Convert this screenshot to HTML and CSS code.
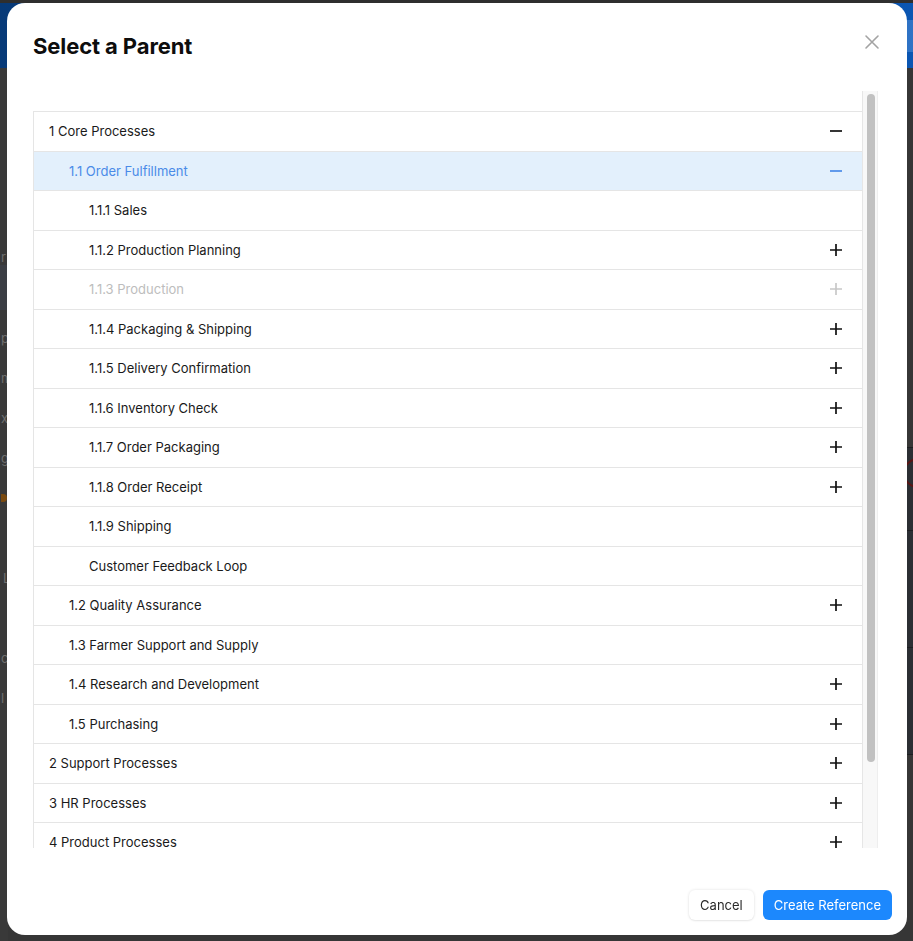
FILE: index.html
```html
<!DOCTYPE html>
<html lang="en">
<head>
<meta charset="utf-8">
<title>Select a Parent</title>
<link rel="stylesheet" href="styles.css">
</head>
<body>
<div class="app">
  <header class="app-bar">
    <div class="app-bar-top"></div>
    <div class="app-bar-band"></div>
    <div class="app-bar-bottom"></div>
  </header>
  <div class="app-main">
    <nav class="side">
      <div class="side-item side-first"><span>r</span></div>
      <div class="side-item side-band"></div>
      <div class="side-item"><span>p</span></div>
      <div class="side-item"><span>m</span></div>
      <div class="side-item"><span>x</span></div>
      <div class="side-item"><span>g</span></div>
      <div class="side-item"><span class="dot"></span></div>
      <div class="side-item side-gap"><span class="ind">L</span></div>
      <div class="side-item side-gap"><span>c</span></div>
      <div class="side-item"><span>l</span></div>
    </nav>
    <div class="canvas">
      <div class="canvas-spacer"></div>
      <div class="canvas-panel">
        <div class="panel-row panel-row-a"><span class="ring"></span></div>
        <div class="panel-row panel-row-b"></div>
        <div class="panel-row panel-row-c"></div>
      </div>
    </div>
  </div>
</div>

<div class="overlay">
  <div class="modal" role="dialog" aria-labelledby="modal-title">
    <div class="modal-header">
      <h2 class="modal-title" id="modal-title">Select a Parent</h2>
    </div>
    <button class="modal-close" aria-label="Close">
      <svg viewBox="0 0 16 16" width="16" height="16"><path d="M2 2L14 14M14 2L2 14" stroke="#a3a3a3" stroke-width="1.6" fill="none" stroke-linecap="round"/></svg>
    </button>
    <div class="modal-body">
      <div class="tree-scroll">
        <ul class="tree">
          <li class="row l0"><span class="label">1 Core Processes</span><svg class="ico" viewBox="0 0 12 12"><path d="M0 6H12" /></svg></li>
          <li class="row l1 selected"><span class="label">1.1 Order Fulfillment</span><svg class="ico" viewBox="0 0 12 12"><path d="M0 6H12" /></svg></li>
          <li class="row l2"><span class="label">1.1.1 Sales</span></li>
          <li class="row l2"><span class="label">1.1.2 Production Planning</span><svg class="ico" viewBox="0 0 12 12"><path d="M0 6H12M6 0V12" /></svg></li>
          <li class="row l2 disabled"><span class="label">1.1.3 Production</span><svg class="ico" viewBox="0 0 12 12"><path d="M0 6H12M6 0V12" /></svg></li>
          <li class="row l2"><span class="label">1.1.4 Packaging &amp; Shipping</span><svg class="ico" viewBox="0 0 12 12"><path d="M0 6H12M6 0V12" /></svg></li>
          <li class="row l2"><span class="label">1.1.5 Delivery Confirmation</span><svg class="ico" viewBox="0 0 12 12"><path d="M0 6H12M6 0V12" /></svg></li>
          <li class="row l2"><span class="label">1.1.6 Inventory Check</span><svg class="ico" viewBox="0 0 12 12"><path d="M0 6H12M6 0V12" /></svg></li>
          <li class="row l2"><span class="label">1.1.7 Order Packaging</span><svg class="ico" viewBox="0 0 12 12"><path d="M0 6H12M6 0V12" /></svg></li>
          <li class="row l2"><span class="label">1.1.8 Order Receipt</span><svg class="ico" viewBox="0 0 12 12"><path d="M0 6H12M6 0V12" /></svg></li>
          <li class="row l2"><span class="label">1.1.9 Shipping</span></li>
          <li class="row l2"><span class="label">Customer Feedback Loop</span></li>
          <li class="row l1"><span class="label">1.2 Quality Assurance</span><svg class="ico" viewBox="0 0 12 12"><path d="M0 6H12M6 0V12" /></svg></li>
          <li class="row l1"><span class="label">1.3 Farmer Support and Supply</span></li>
          <li class="row l1"><span class="label">1.4 Research and Development</span><svg class="ico" viewBox="0 0 12 12"><path d="M0 6H12M6 0V12" /></svg></li>
          <li class="row l1"><span class="label">1.5 Purchasing</span><svg class="ico" viewBox="0 0 12 12"><path d="M0 6H12M6 0V12" /></svg></li>
          <li class="row l0"><span class="label">2 Support Processes</span><svg class="ico" viewBox="0 0 12 12"><path d="M0 6H12M6 0V12" /></svg></li>
          <li class="row l0"><span class="label">3 HR Processes</span><svg class="ico" viewBox="0 0 12 12"><path d="M0 6H12M6 0V12" /></svg></li>
          <li class="row l0"><span class="label">4 Product Processes</span><svg class="ico" viewBox="0 0 12 12"><path d="M0 6H12M6 0V12" /></svg></li>
        </ul>
      </div>
      <div class="scrollbar" aria-hidden="true"><div class="scrollbar-thumb"></div></div>
    </div>
    <div class="modal-footer">
      <button class="btn btn-default">Cancel</button>
      <button class="btn btn-primary">Create Reference</button>
    </div>
  </div>
</div>
</body>
</html>
```

FILE: styles.css
```css
* { box-sizing: border-box; }

html, body {
  margin: 0;
  padding: 0;
  height: 100%;
}

body {
  background: #363636;
  font-family: Inter, "Noto Sans", "Liberation Sans", sans-serif;
  overflow: hidden;
}

/* ---------- background application (dimmed) ---------- */
.app {
  display: flex;
  flex-direction: column;
  height: 100%;
}

.app-bar {
  display: flex;
  flex-direction: column;
  height: 68px;
  border-top: 3px solid #2f2f2f;
  background: linear-gradient(90deg, #073a78 0%, #0a4c9e 60%, #0b56b2 100%);
}

.app-bar-top { height: 17px; }
.app-bar-band {
  height: 32px;
  background: linear-gradient(90deg, rgba(255,255,255,0) 0%, rgba(255,255,255,0) 70%, rgba(90,150,220,0.45) 100%);
}
.app-bar-bottom { flex: 1; }

.app-main {
  display: flex;
  flex: 1;
  min-height: 0;
}

.side {
  width: 8px;
  overflow: hidden;
  display: flex;
  flex-direction: column;
  background: #393939;
  color: #6f6f6f;
  font-size: 13px;
  padding-top: 180px;
}

.side-item {
  display: flex;
  justify-content: flex-start;
  align-items: center;
  height: 40px;
  white-space: nowrap;
  padding-left: 1px;
}

.side-first { height: 17px; }
.side-band {
  height: 45px;
  background: #3b3e44;
  margin-bottom: 8px;
}
.side-gap { margin-top: 40px; }

.ind { padding-left: 2px; }

.dot {
  display: inline-block;
  width: 6px;
  height: 8px;
  border-radius: 0 4px 4px 0;
  background: #7a4a10;
}

.canvas {
  flex: 1;
  display: flex;
  flex-direction: column;
  background: #363636;
}

.canvas-spacer { height: 379px; }

.canvas-panel {
  display: flex;
  flex-direction: column;
  background: #2b2e33;
  border-top: 1px solid #1c1e21;
}

.panel-row {
  border-bottom: 1px solid #1c1e21;
  display: flex;
  justify-content: flex-end;
}
.panel-row-a { height: 83px; }
.panel-row-b { height: 117px; }
.panel-row-c { height: 107px; }

.ring {
  width: 30px;
  height: 30px;
  margin-top: 10px;
  margin-right: -20px;
  border: 2px solid #5a1414;
  border-radius: 50%;
}

/* ---------- overlay + modal ---------- */
.overlay {
  position: fixed;
  inset: 0;
}

.modal {
  position: absolute;
  left: 7px;
  top: 3px;
  width: 900px;
  height: 932px;
  background: #ffffff;
  border-radius: 18px;
  display: flex;
  flex-direction: column;
}

.modal-header {
  padding: 28px 26px 0;
}

.modal-title {
  margin: 0;
  font-size: 22px;
  line-height: 30px;
  font-weight: 700;
  color: #0d0d0d;
  letter-spacing: -0.1px;
}

.modal-close {
  position: absolute;
  top: 30px;
  right: 27px;
  width: 17px;
  height: 17px;
  padding: 0;
  border: 0;
  background: transparent;
  display: flex;
  align-items: center;
  justify-content: center;
}

.modal-body {
  margin: 30px 29px 0 26px;
  height: 757px;
  display: flex;
}

.tree-scroll {
  flex: 1;
  min-width: 0;
  overflow: hidden;
  padding-top: 20px;
}

.scrollbar {
  flex: none;
  width: 16px;
  background: #f8f8f8;
  border-left: 1px solid #e6e6e6;
  border-right: 1px solid #eeeeee;
  padding: 3px 0 0 4px;
}

.scrollbar-thumb {
  width: 8px;
  height: 668px;
  border-radius: 4px;
  background: #c1c1c1;
}

.tree {
  list-style: none;
  margin: 0;
  padding: 0;
  border-top: 1px solid #e5e5e5;
  border-left: 1px solid #e5e5e5;
}

.row {
  display: flex;
  align-items: center;
  justify-content: space-between;
  height: 39.5px;
  border-bottom: 1px solid #e5e5e5;
  padding-right: 20px;
  font-size: 13px;
  color: #1a1a1a;
}

.l0 { padding-left: 15px; }
.l1 { padding-left: 35px; }
.l2 { padding-left: 55px; }

.row.selected {
  background: #e3f0fc;
  color: #4a8be8;
}

.row.disabled {
  color: #bdbdbd;
}

.ico {
  width: 12px;
  height: 12px;
  flex: none;
  stroke: #111111;
  stroke-width: 1.7;
  fill: none;
}

.selected .ico { stroke: #4a8be8; }
.disabled .ico { stroke: #c8c8c8; }

.modal-footer {
  margin-top: auto;
  display: flex;
  justify-content: flex-end;
  gap: 9px;
  padding: 0 15px 15px;
}

.btn {
  height: 30px;
  padding: 0 11px;
  border: 0;
  border-radius: 6px;
  font-family: inherit;
  font-size: 13px;
}

.btn-default {
  background: #ffffff;
  color: #2a2a2a;
  box-shadow: 0 0 3px rgba(0,0,0,0.12), 0 1px 2px rgba(0,0,0,0.06);
}

.btn-primary {
  background: #1c88fd;
  color: #ffffff;
}
```
